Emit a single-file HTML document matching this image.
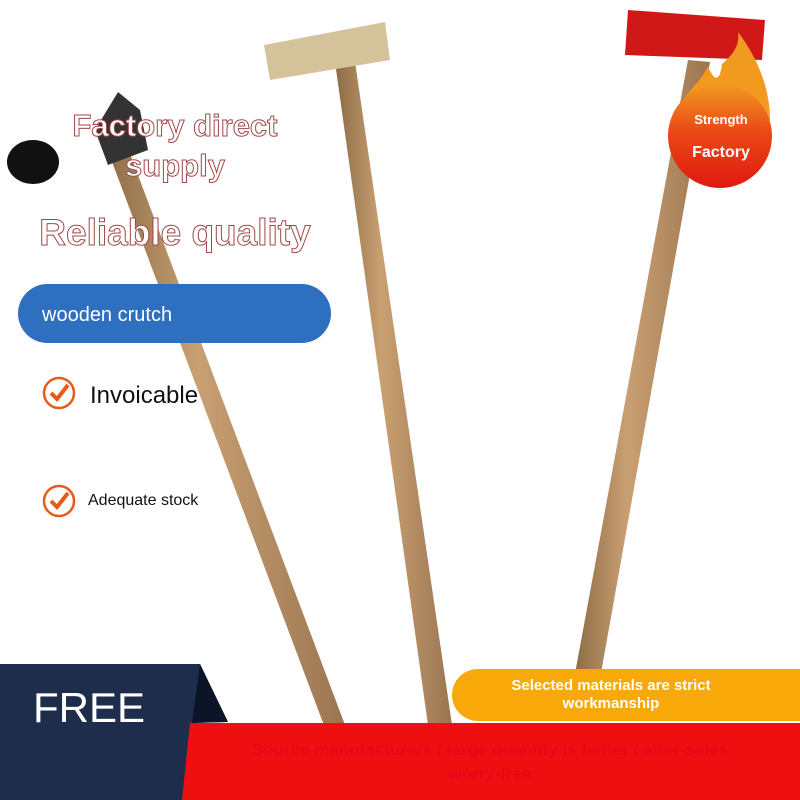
<!DOCTYPE html>
<html><head><style>
body{margin:0;width:800px;height:800px;overflow:hidden;background:#fff;font-family:"Liberation Sans",sans-serif;position:relative}
.a{position:absolute}
.out{color:#fff;font-weight:bold;-webkit-text-stroke:1px #a04848;text-align:center}
</style></head><body>
<svg class="a" style="left:0;top:0" width="800" height="800">
<defs><linearGradient id="w" x1="0" x2="1"><stop offset="0" stop-color="#8a6a45"/><stop offset=".4" stop-color="#c9a072"/><stop offset="1" stop-color="#9a7550"/></linearGradient>
<linearGradient id="f" x1="0" y1="0" x2="0" y2="1"><stop offset="0" stop-color="#f29a20"/><stop offset=".45" stop-color="#ea4a16"/><stop offset="1" stop-color="#e01810"/></linearGradient></defs>
<polygon points="100,130 118,122 345,725 325,728" fill="url(#w)"/>
<polygon points="95,130 118,92 140,110 148,150 108,165" fill="#333"/>
<ellipse cx="33" cy="162" rx="26" ry="22" fill="#111"/>
<polygon points="334,55 354,55 452,725 428,725" fill="url(#w)"/>
<polygon points="264,45 385,22 390,60 270,80" fill="#d4c29a"/>
<polygon points="688,60 710,62 598,690 572,690" fill="url(#w)"/>
<polygon points="628,10 765,20 762,60 625,55" fill="#d01818"/>
<path d="M680,110 C684,92 700,84 708,66 C714,82 720,82 722,64 C734,54 740,44 738,32 C756,56 770,86 770,120 Z" fill="#f29a20"/>
<circle cx="720" cy="136" r="52" fill="url(#f)"/>
</svg>
<div class="a out" style="left:20px;top:106px;width:310px;font-size:31px;line-height:40px">Factory direct<br>supply</div>
<div class="a out" style="left:20px;top:212px;width:310px;font-size:37px">Reliable quality</div>
<div class="a" style="left:18px;top:284px;width:313px;height:59px;border-radius:30px;background:#2e6fc0;color:#fff;font-size:20px;line-height:62px;box-sizing:border-box;padding-left:24px">wooden crutch</div>
<svg class="a" style="left:42px;top:376px" width="34" height="34"><circle cx="17" cy="17" r="15" fill="#fff" stroke="#e85a1a" stroke-width="2.5"/><path d="M9,17 L15,23 L26,9" stroke="#e85a1a" stroke-width="4" fill="none"/></svg>
<div class="a" style="left:90px;top:382px;font-size:24px;color:#111">Invoicable</div>
<svg class="a" style="left:42px;top:484px" width="34" height="34"><circle cx="17" cy="17" r="15" fill="#fff" stroke="#e85a1a" stroke-width="2.5"/><path d="M9,17 L15,23 L26,9" stroke="#e85a1a" stroke-width="4" fill="none"/></svg>
<div class="a" style="left:88px;top:492px;font-size:16px;color:#111">Adequate stock</div>
<div class="a" style="left:670px;top:112px;width:102px;text-align:center;color:#fff;font-weight:bold;font-size:13px">Strength</div>
<div class="a" style="left:670px;top:144px;width:102px;text-align:center;color:#fff;font-weight:bold;font-size:16px">Factory</div>
<div class="a" style="left:452px;top:669px;width:348px;height:52px;border-radius:26px 0 0 26px;background:#f8a808;color:#fff;font-weight:bold;font-size:15px;text-align:center;line-height:18px;padding-top:8px;box-sizing:border-box;padding-right:30px">Selected materials are strict<br>workmanship</div>
<div class="a" style="left:0;top:723px;width:800px;height:77px;background:#ee1010"></div>
<div class="a" style="left:200px;top:738px;width:580px;text-align:center;color:#e80818;font-weight:bold;font-size:17px;line-height:24px">Source manufacturers / large quantity is better / after-sales<br>worry-free</div>
<svg class="a" style="left:0;top:664px" width="230" height="136"><polygon points="0,0 200,0 228,58 190,59 182,136 0,136" fill="#1e2d4c"/><polygon points="200,0 228,58 192,59" fill="#0c1528"/></svg>
<div class="a" style="left:33px;top:684px;color:#fff;font-size:42px">FREE</div>
</body></html>
